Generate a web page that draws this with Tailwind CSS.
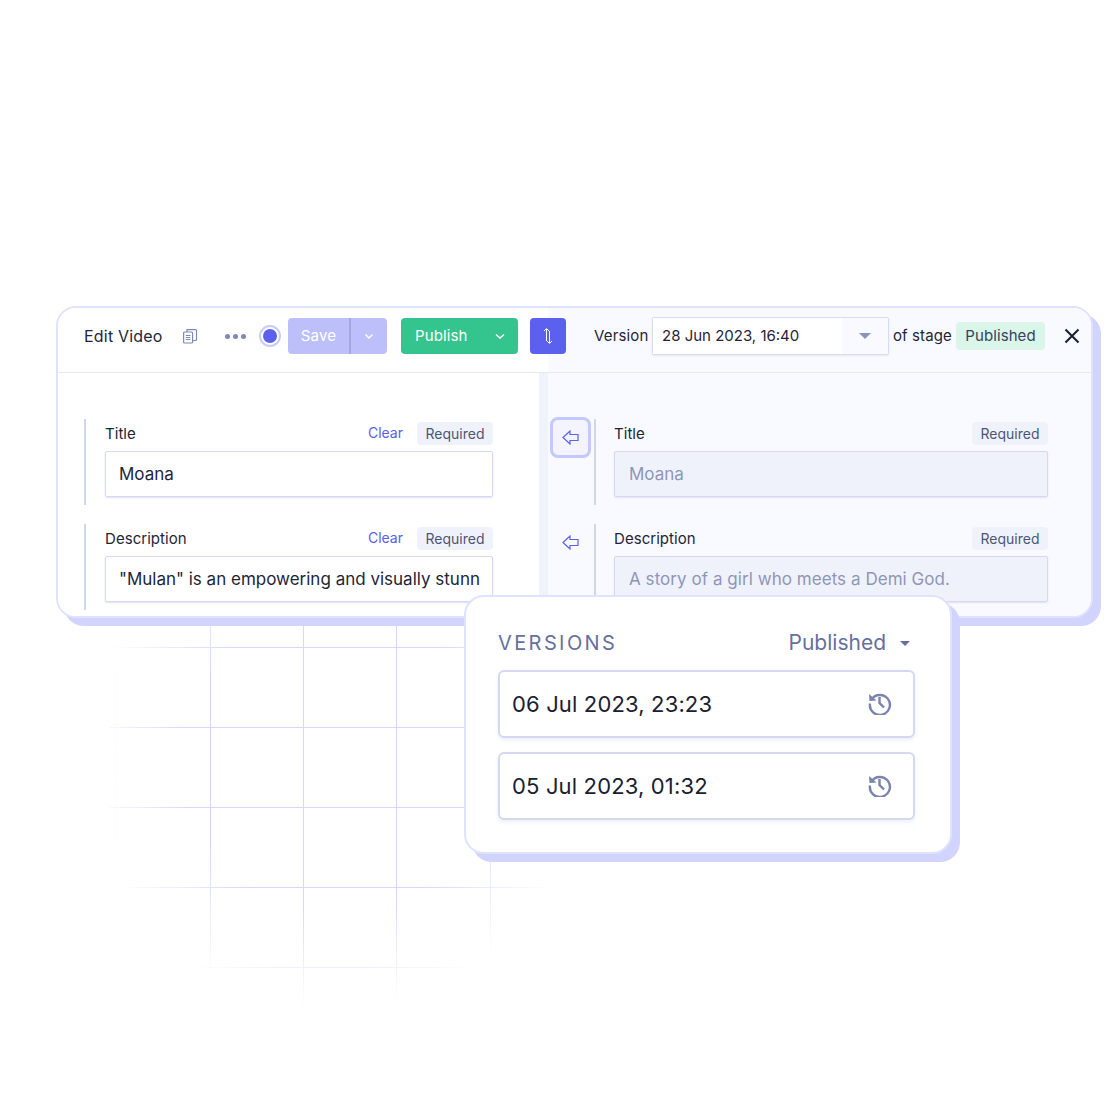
<!DOCTYPE html>
<html lang="en">
<head>
    <meta charset="UTF-8">
    <meta name="viewport" content="width=device-width, initial-scale=1.0">
    <title>Edit Video</title>
    <script src="https://cdn.jsdelivr.net/npm/@tailwindcss/browser@4"></script>
</head>
<body class="bg-white font-[Inter,sans-serif] text-[#1e2538]">
    <div class="relative w-[1120px] h-[1120px] overflow-hidden pt-[306px] pl-[56px]">

        <!-- background grid -->
        <svg class="absolute left-0 top-0" width="1120" height="1120" fill="none">
            <defs>
                <radialGradient id="fade" gradientUnits="userSpaceOnUse" cx="335" cy="760" r="250">
                    <stop offset="0.6" stop-color="#fff"/>
                    <stop offset="1" stop-color="#fff" stop-opacity="0"/>
                </radialGradient>
                <mask id="gridMask" maskUnits="userSpaceOnUse" x="0" y="600" width="700" height="420">
                    <rect x="0" y="600" width="700" height="420" fill="url(#fade)"/>
                </mask>
            </defs>
            <g mask="url(#gridMask)" stroke="#d6d9ff">
                <path stroke-opacity="0.3" d="M116.500 620V1010"/>
                <path d="M210.500 620V1010M303.500 620V1010M396.500 620V1010M490.500 620V1010"/>
                <path d="M110 647.500H600M110 727.500H600M110 807.500H600M110 887.500H600M110 967.500H600"/>
            </g>
        </svg>

        <!-- editor window -->
        <div class="relative w-[1037px] h-[312px] rounded-[20px] border-2 border-[#e0e3ff] bg-white shadow-[8px_8px_0_#d0d4ff] overflow-hidden">
            <div class="flex flex-col h-full bg-[linear-gradient(90deg,#fff_490px,#f9faff_490px)]">

                <!-- toolbar -->
                <div class="flex items-center h-[65px] shrink-0 border-b border-[#e6e8f6] pl-[26px] pb-[8px]">
                    <span class="text-[16px] font-normal tracking-[0.2px] w-[78px] whitespace-nowrap">Edit Video</span>
                    <svg class="ml-[20px]" width="16" height="16" viewBox="0 0 16 16" fill="none" stroke="#8089b0" stroke-width="1.2">
                        <rect x="1.6" y="4" width="9" height="11" rx="1"/>
                        <path d="M5 4V1.6H13.5a1 1 0 0 1 1 1V11.5a1 1 0 0 1-1 1H10.600M3.800 7.500H8.400M3.800 9.500H8.400M3.800 11.500H8.400"/>
                    </svg>
                    <div class="ml-[27px] flex gap-[3px]">
                        <span class="size-[5px] rounded-full bg-[#8089b0]"></span>
                        <span class="size-[5px] rounded-full bg-[#8089b0]"></span>
                        <span class="size-[5px] rounded-full bg-[#8089b0]"></span>
                    </div>
                    <div class="ml-[13px] size-[22px] rounded-full border-2 border-[#c9ccfb] bg-white flex items-center justify-center">
                        <span class="size-[14px] rounded-full bg-[#5b60ef]"></span>
                    </div>
                    <div class="ml-[7px] flex h-[36px] w-[99px] rounded-[4px] bg-[#bdbffb] text-white">
                        <span class="w-[61px] flex items-center justify-center text-[15px] font-normal tracking-[0.2px] border-r-2 border-[#a4a6e4] box-content">Save</span>
                        <span class="flex-1 flex items-center justify-center">
                            <svg width="12" height="12" viewBox="0 0 12 12" fill="none" stroke="#fff" stroke-width="1.4"><path d="M2.500 4.500L6 8L9.500 4.500"/></svg>
                        </span>
                    </div>
                    <div class="ml-[14px] flex h-[36px] w-[117px] rounded-[4px] bg-[#34c48d] text-white items-center justify-between pl-[14px] pr-[12px]">
                        <span class="text-[15px] font-normal tracking-[0.1px]">Publish</span>
                        <svg width="12" height="12" viewBox="0 0 12 12" fill="none" stroke="#fff" stroke-width="1.4"><path d="M2 4.500L6 8L10 4.500"/></svg>
                    </div>
                    <div class="ml-[12px] size-[36px] rounded-[4px] bg-[#5b60ef] flex items-center justify-center">
                        <svg width="10" height="18" viewBox="0 0 10 18" fill="none" stroke="#fff" stroke-width="1"><path d="M1 4L3.500 1.500L6 4M3.500 2V14M4 14L6.500 16.500L9 14M6.500 16V4"/></svg>
                    </div>
                    <span class="ml-[28px] w-[54px] text-[15px] font-normal tracking-[0.15px] whitespace-nowrap">Version</span>
                    <div class="ml-[4px] flex h-[38px] w-[237px] rounded-[2px] border border-[#d8dbf4] shadow-[0_1px_2px_#e3e5f5] overflow-hidden">
                        <span class="w-[189px] bg-white pl-[9px] flex items-center text-[15px] font-normal whitespace-nowrap">28 Jun 2023, 16:40</span>
                        <span class="flex-1 flex items-center justify-center">
                            <svg width="12" height="6" viewBox="0 0 12 6" fill="#8b93b8"><path d="M0 0H12L6 6Z"/></svg>
                        </span>
                    </div>
                    <span class="ml-[4px] w-[59px] text-[15px] font-normal tracking-[0.1px] whitespace-nowrap">of stage</span>
                    <span class="ml-[4px] h-[28px] w-[89px] rounded-[4px] bg-[#d9f6e8] flex items-center justify-center text-[15px] font-normal tracking-[0.1px] text-[#39415f]">Published</span>
                    <svg class="ml-[19px]" width="16" height="16" viewBox="0 0 16 16" fill="none" stroke="#1e2538" stroke-width="2.200"><path d="M1.500 1.500L14.500 14.500M14.500 1.500L1.500 14.500"/></svg>
                </div>

                <!-- compare panes -->
                <div class="flex flex-1 min-h-0">
                    <div class="w-[481px] shrink-0 pl-[26px] pt-[46px] flex flex-col gap-[19px]">
                        <div class="w-[409px] h-[86px] shrink-0 border-l-[2px] border-[#d0d6eb] pl-[19px] flex flex-col">
                            <div class="flex items-center h-[28px]">
                                <span class="text-[15px] font-normal tracking-[0.05px] flex-1 mt-[2px]">Title</span>
                                <span class="text-[14px] text-[#5b60ef] mr-[14px] mb-[2px]">Clear</span>
                                <span class="h-[23px] w-[76px] rounded-[4px] bg-[#f0f2fb] flex items-center justify-center text-[14px] text-[#4d5675]">Required</span>
                            </div>
                            <div class="h-[46px] mt-[4px] rounded-[2px] border border-[#d5d8f5] shadow-[0_1px_2px_#dfe2f5] px-[13px] pt-[2px] flex items-center text-[17px] whitespace-nowrap overflow-hidden">Moana</div>
                        </div>
                        <div class="w-[409px] h-[86px] shrink-0 border-l-[2px] border-[#d0d6eb] pl-[19px] flex flex-col">
                            <div class="flex items-center h-[28px]">
                                <span class="text-[15px] font-normal tracking-[0.05px] flex-1 mt-[2px]">Description</span>
                                <span class="text-[14px] text-[#5b60ef] mr-[14px] mb-[2px]">Clear</span>
                                <span class="h-[23px] w-[76px] rounded-[4px] bg-[#f0f2fb] flex items-center justify-center text-[14px] text-[#4d5675]">Required</span>
                            </div>
                            <div class="h-[46px] mt-[4px] rounded-[2px] border border-[#d5d8f5] shadow-[0_1px_2px_#dfe2f5] pl-[13px] pr-[12px] pt-[2px] flex items-center text-[17px] whitespace-nowrap overflow-hidden">"Mulan" is an empowering and visually stunn</div>
                        </div>
                    </div>
                    <div class="w-[9px] shrink-0 bg-[#f0f2fc]"></div>
                    <div class="flex-1 pl-[2px] pt-[44px] flex flex-col gap-[19px]">
                        <div class="flex h-[88px] shrink-0">
                            <div class="size-[41px] rounded-[8px] border-[3px] border-[#c5c8ff] bg-[#f3f4ff] flex items-center justify-center">
                                <svg width="17" height="15" viewBox="0 0 17 15" fill="none" stroke="#5b60ef" stroke-width="1.200"><path d="M1 7.500L8 1V4.500H16V10.500H8V14Z"/></svg>
                            </div>
                            <div class="ml-[3px] mt-[2px] w-[454px] h-[86px] border-l-[2px] border-[#d0d6eb] pl-[18px] flex flex-col">
                                <div class="flex items-center h-[28px]">
                                    <span class="text-[15px] font-normal tracking-[0.05px] flex-1 mt-[2px]">Title</span>
                                    <span class="h-[23px] w-[76px] rounded-[4px] bg-[#f0f2fb] flex items-center justify-center text-[14px] text-[#4d5675]">Required</span>
                                </div>
                                <div class="h-[46px] mt-[4px] rounded-[2px] border border-[#d5d8f0] bg-[#f0f2fb] shadow-[0_1px_2px_#dfe2f5] px-[14px] pt-[2px] flex items-center text-[17px] text-[#8e96b8]">Moana</div>
                            </div>
                        </div>
                        <div class="flex h-[88px] -mt-[2px] shrink-0">
                            <div class="size-[41px] flex items-center justify-center">
                                <svg width="17" height="15" viewBox="0 0 17 15" fill="none" stroke="#5b60ef" stroke-width="1.200"><path d="M1 7.500L8 1V4.500H16V10.500H8V14Z"/></svg>
                            </div>
                            <div class="ml-[3px] mt-[2px] w-[454px] h-[86px] border-l-[2px] border-[#d0d6eb] pl-[18px] flex flex-col">
                                <div class="flex items-center h-[28px]">
                                    <span class="text-[15px] font-normal tracking-[0.05px] flex-1 mt-[2px]">Description</span>
                                    <span class="h-[23px] w-[76px] rounded-[4px] bg-[#f0f2fb] flex items-center justify-center text-[14px] text-[#4d5675]">Required</span>
                                </div>
                                <div class="h-[46px] mt-[4px] rounded-[2px] border border-[#d5d8f0] bg-[#f0f2fb] shadow-[0_1px_2px_#dfe2f5] px-[14px] pt-[2px] flex items-center text-[17px] tracking-[0.05px] text-[#8e96b8] whitespace-nowrap">A story of a girl who meets a Demi God.</div>
                            </div>
                        </div>
                    </div>
                </div>
            </div>
        </div>

        <!-- versions popover -->
        <div class="absolute left-[464px] top-[595px] w-[488px] h-[259px] rounded-[20px] border-2 border-[#e0e3ff] bg-white shadow-[8px_8px_0_#d0d4ff] pl-[32px] pr-[35px] pt-[31px]">
            <div class="flex items-center h-[30px] text-[#6570a0] text-[20px]">
                <span class="flex-1 tracking-[2.400px]">VERSIONS</span>
                <span class="text-[21px] font-normal">Published</span>
                <svg class="ml-[14px] mr-[5px]" width="10" height="5" viewBox="0 0 10 5" fill="#6570a0"><path d="M0 0H10L5 5Z"/></svg>
            </div>
            <div class="mt-[12px] flex flex-col gap-[14px]">
                <div class="h-[68px] rounded-[6px] border-2 border-[#d5d8f0] shadow-[0_2px_4px_#eceef8] flex items-center justify-between pl-[12px] pr-[21px]">
                    <span class="text-[22px] font-normal tracking-[0.15px] whitespace-nowrap text-[#1a2030]">06 Jul 2023, 23:23</span>
                    <svg class="-mt-[2px]" width="24" height="24" viewBox="0 0 24 24" fill="none" stroke="#7a84ad" stroke-width="2.400">
                        <path d="M3.500 8.500A10 10 0 1 1 2 12.500"/>
                        <path d="M1 3L1.500 10L8.500 9.500Z" fill="#7a84ad" stroke="none"/>
                        <path d="M11.500 6V12L16 16.500"/>
                    </svg>
                </div>
                <div class="h-[68px] rounded-[6px] border-2 border-[#d5d8f0] shadow-[0_2px_4px_#eceef8] flex items-center justify-between pl-[12px] pr-[21px]">
                    <span class="text-[22px] font-normal tracking-[0.15px] whitespace-nowrap text-[#1a2030]">05 Jul 2023, 01:32</span>
                    <svg class="-mt-[2px]" width="24" height="24" viewBox="0 0 24 24" fill="none" stroke="#7a84ad" stroke-width="2.400">
                        <path d="M3.500 8.500A10 10 0 1 1 2 12.500"/>
                        <path d="M1 3L1.500 10L8.500 9.500Z" fill="#7a84ad" stroke="none"/>
                        <path d="M11.500 6V12L16 16.500"/>
                    </svg>
                </div>
            </div>
        </div>
    </div>
</body>
</html>
